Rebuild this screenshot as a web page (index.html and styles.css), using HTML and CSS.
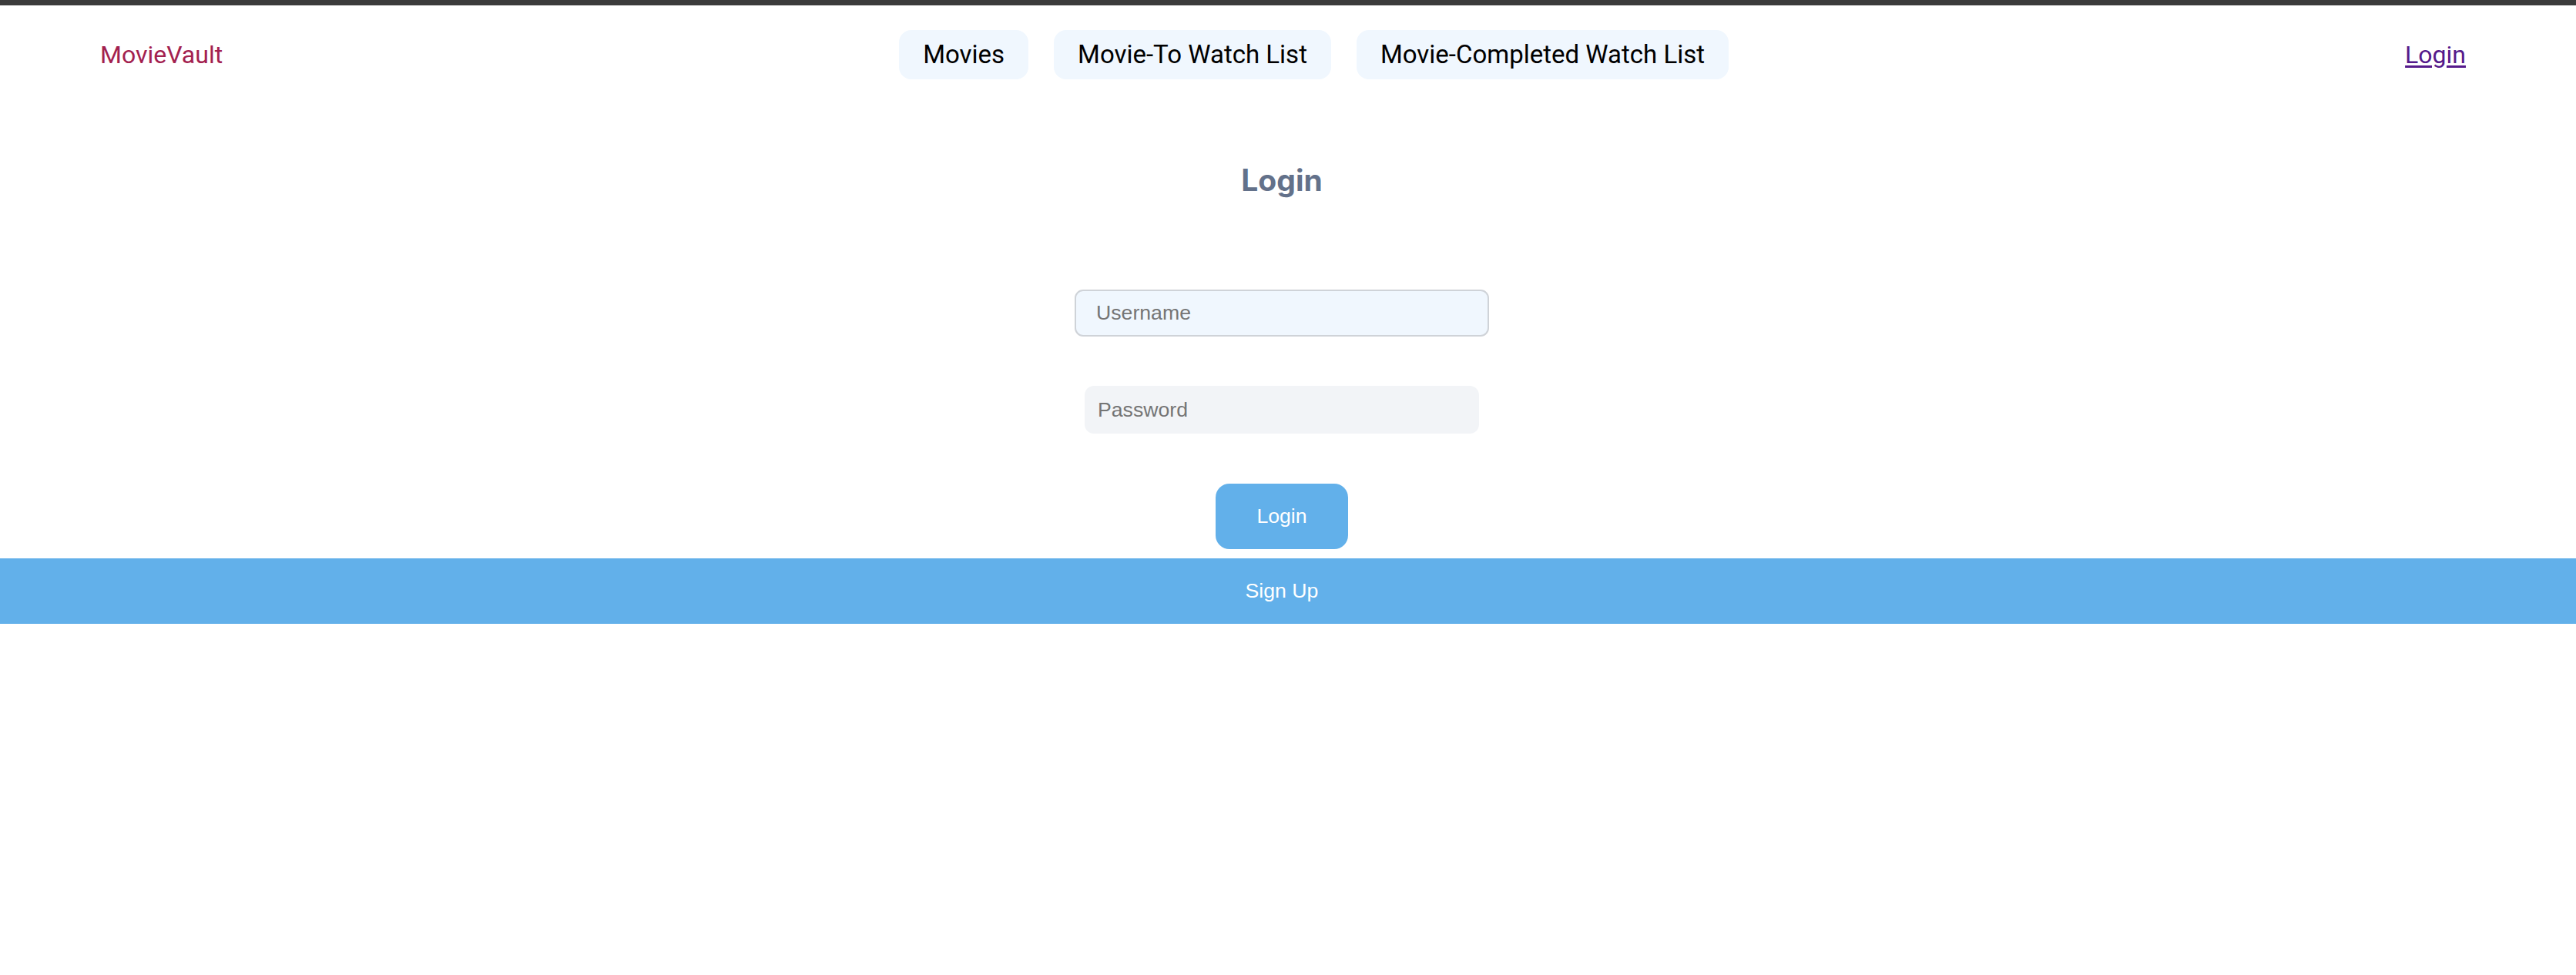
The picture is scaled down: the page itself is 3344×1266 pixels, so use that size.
FILE: index.html
```html
<!DOCTYPE html>
<html>
<head>
     <title>MovieVault - Login</title>
     <link rel="stylesheet" href="styles.css">
</head>
<body>
     <div class="topline"></div>

     <nav class="navbar">
          <a class="brand" href="#">MovieVault</a>
          <div class="links">
               <a class="pill" href="#">Movies</a>
               <a class="pill" href="#">Movie-To Watch List</a>
               <a class="pill" href="#">Movie-Completed Watch List</a>
          </div>
          <a class="login-link" href="#">Login</a>
     </nav>

     <main class="login">
          <h2 class="title">Login</h2>
          <form class="form">
               <input class="username" type="text" placeholder="Username">
               <input class="password" type="password" placeholder="Password">
               <button class="btn" type="button">Login</button>
          </form>
     </main>
     <button class="signup" type="button">Sign Up</button>
</body>
</html>
```

FILE: styles.css
```css
body {
     margin: 0;
     background: #fff;
}

.topline {
     height: 7px;
     background-color: #3b3b3b;
}

.navbar {
     display: flex;
     justify-content: space-between;
     align-items: center;
     padding: 32px 143px 0 130px;
     font-family: Roboto, "Liberation Sans", sans-serif;
     font-size: 32px;
}

.brand {
     color: #a3214f;
     text-decoration: none;
}

.links {
     display: flex;
     gap: 33px;
}

.pill {
     display: block;
     padding: 0 31px;
     height: 64px;
     line-height: 64px;
     font-size: 33px;
     background-color: #f0f7fe;
     border-radius: 16px;
     color: #000;
     text-decoration: none;
}

.login-link {
     color: #551a8b;
     text-decoration: underline;
     text-underline-offset: 3px;
}

.login {
     display: flex;
     flex-direction: column;
     align-items: center;
     padding-right: 16px;
}

.title {
     margin: 107px 0 0;
     font-family: Inter, "Liberation Sans", sans-serif;
     font-size: 39px;
     font-weight: 700;
     line-height: 48px;
     color: #63718a;
}

.form {
     display: flex;
     flex-direction: column;
     align-items: center;
     margin-top: 118px;
}

.form input {
     box-sizing: border-box;
     font-family: "Liberation Sans", Arial, sans-serif;
     font-size: 26.67px;
     color: #333;
     outline: none;
}

.form input::placeholder {
     color: #757575;
}

.username {
     width: 538px;
     height: 61px;
     padding: 0 26px;
     background-color: #f0f7fe;
     border: 2px solid #cfd3d8;
     border-radius: 11px;
}

.password {
     width: 512px;
     height: 62px;
     margin-top: 64px;
     padding: 0 17px;
     background-color: #f2f4f7;
     border: none;
     border-radius: 12px;
}

.btn {
     width: 172px;
     height: 85px;
     margin-top: 65px;
     background-color: #62b0ea;
     color: #fff;
     border: none;
     border-radius: 18px;
     font-family: "Liberation Sans", Arial, sans-serif;
     font-size: 26.67px;
}

.signup {
     display: block;
     width: 100%;
     height: 85px;
     margin-top: 12px;
     padding: 0 16px 0 0;
     background-color: #62b0ea;
     color: #fff;
     border: none;
     font-family: "Liberation Sans", Arial, sans-serif;
     font-size: 26.67px;
}
```
